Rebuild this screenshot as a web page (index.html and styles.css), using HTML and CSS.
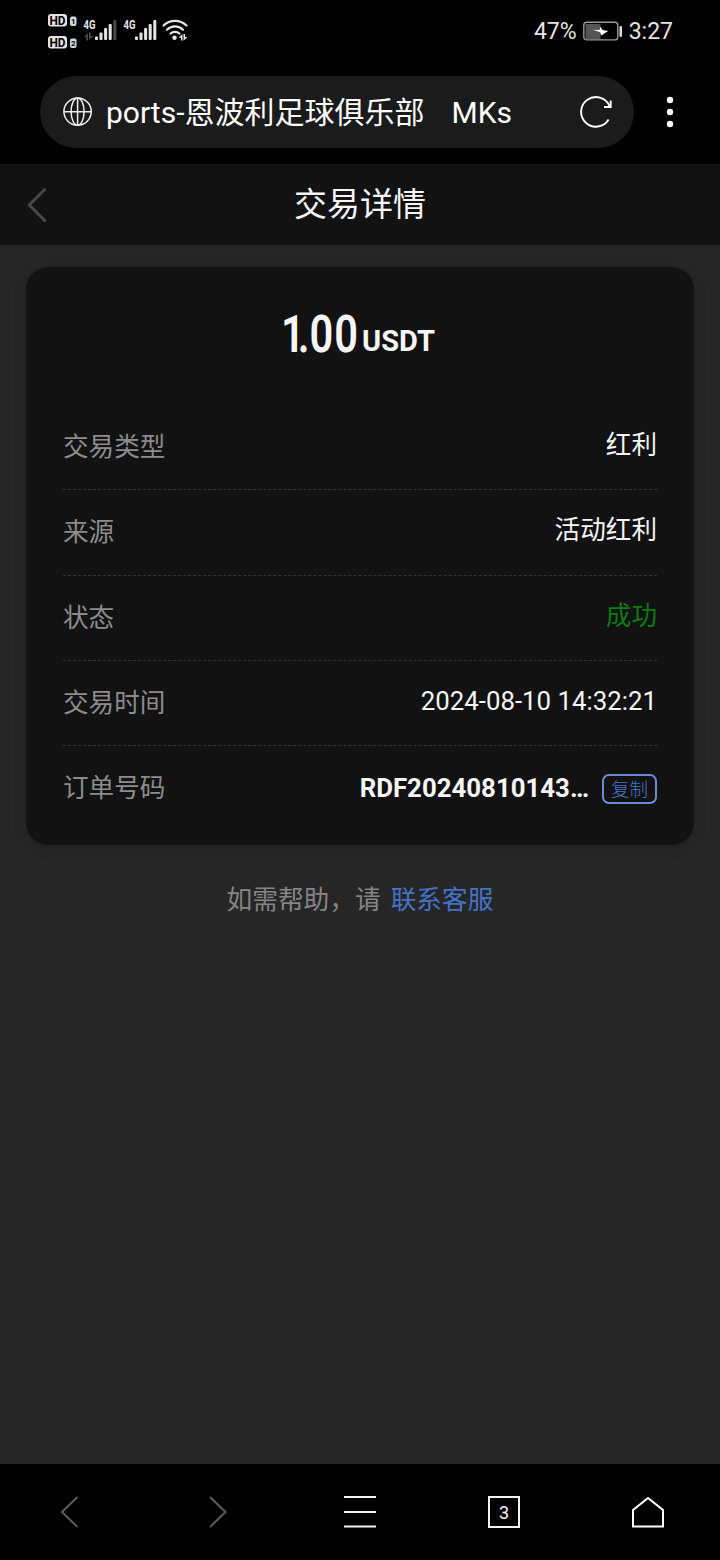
FILE: index.html
```html
<!DOCTYPE html>
<html lang="zh-CN">
<head>
<meta charset="utf-8">
<title>交易详情</title>
<link rel="stylesheet" href="styles.css">
</head>
<body>
<div class="screen">
  <div class="status">
    <svg class="status-icons" width="144" height="44" viewBox="46 8 144 44">
      <rect x="48" y="14" width="19" height="12.500" rx="3" fill="#e4e4e4"/>
      <text class="hd" x="49.500" y="24.700" textLength="16" lengthAdjust="spacingAndGlyphs">HD</text>
      <rect x="70" y="16.500" width="6.500" height="9.500" rx="2" fill="#d8d8d8"/>
      <text class="sim" x="71" y="24.200">1</text>
      <rect x="48" y="36" width="19" height="12.500" rx="3" fill="#e4e4e4"/>
      <text class="hd" x="49.500" y="46.700" textLength="16" lengthAdjust="spacingAndGlyphs">HD</text>
      <rect x="70" y="38.500" width="6.500" height="9.500" rx="2" fill="#d8d8d8"/>
      <text class="sim" x="71" y="46.200">2</text>
      <text class="net" x="83.500" y="29" textLength="12" lengthAdjust="spacingAndGlyphs">4G</text>
      <text class="net" x="123.500" y="29" textLength="12" lengthAdjust="spacingAndGlyphs">4G</text>
      <g fill="#4a4a4a">
        <path d="M84 37l4-4v7.500h-1.700V37zM93 36l-4 4v-7.500h1.700V36z"/>
        <rect x="113.300" y="20" width="3" height="20" rx="1"/>
      </g>
      <g fill="#e6e6e6">
        <rect x="95" y="36.500" width="3" height="3.500" rx="1"/>
        <rect x="99.500" y="32.500" width="3" height="7.500" rx="1"/>
        <rect x="104.100" y="28" width="3" height="12" rx="1"/>
        <rect x="108.700" y="24" width="3" height="16" rx="1"/>
        <rect x="135" y="36.500" width="3" height="3.500" rx="1"/>
        <rect x="139.500" y="32.500" width="3" height="7.500" rx="1"/>
        <rect x="144.100" y="28" width="3" height="12" rx="1"/>
        <rect x="148.700" y="24" width="3" height="16" rx="1"/>
        <rect x="153.300" y="20" width="3" height="20" rx="1"/>
        <circle cx="174.500" cy="37.800" r="2.200"/>
        <path d="M178.500 37.700l4-3.700v6.500h-1.500v-2.800zM187.500 37l-4 3.700v-6.700h1.500v3z"/>
      </g>
      <path d="M163.500 25.500a16.500 16.500 0 0 1 23 0M167 29.700a11.500 11.500 0 0 1 16 0M170.600 33.500a6.500 6.500 0 0 1 8.800 0" fill="none" stroke="#e6e6e6" stroke-width="2.200" stroke-linecap="round"/>
    </svg>
    <div class="status-right">
      <span>47%</span>
      <svg width="40" height="20" viewBox="0 0 40 20">
        <rect x="2.500" y="3" width="15" height="15" fill="#555"/>
        <rect x=".8" y="1.300" width="34" height="17.600" rx="3" fill="none" stroke="#999" stroke-width="1.400"/>
        <rect x="36.500" y="5" width="2.500" height="11" rx="1.200" fill="#ddd"/>
        <path d="M10 8.700l6.500.3 1-3.300 2 3.300 5.700 1-7 4.500-1-3.300z" fill="#fff"/>
      </svg>
      <span>3:27</span>
    </div>
  </div>
  <div class="browser">
    <div class="address">
      <svg width="30" height="30" viewBox="0 0 30 30" fill="none" stroke="#eee" stroke-width="1.500">
        <circle cx="14.600" cy="14.600" r="13.700"/><ellipse cx="14.600" cy="14.600" rx="6.500" ry="13.700"/><path d="M1 14.800h27.500M14.600 1v27.500"/>
      </svg>
      <span class="url">ports-恩波利足球俱乐部<span class="site">　MKs</span></span>
      <svg class="reload" width="34" height="34" viewBox="0 0 34 34" fill="none" stroke="#fff" stroke-width="1.900">
        <path d="M29.600 24.500A14.800 14.800 0 1 1 30.500 11"/><path d="M31.700 5.500v6.500h-6.700"/>
      </svg>
    </div>
    <svg class="more" width="8" height="32" viewBox="0 0 8 32" fill="#f4f4f4"><circle cx="4" cy="4" r="3.200"/><circle cx="4" cy="16" r="3.200"/><circle cx="4" cy="28" r="3.200"/></svg>
  </div>
  <header class="header">
    <svg width="20" height="36" viewBox="0 0 20 36" fill="none" stroke="#484848" stroke-width="3" stroke-linecap="round" stroke-linejoin="round"><path d="M18.700 2.500L3.200 18l15.500 15.500"/></svg>
    <h1>交易详情</h1>
  </header>
  <main class="main">
    <section class="card">
      <div class="amount">
        <svg width="80" height="74" viewBox="-4 -10 80 74"><text class="num" transform="scale(.8 1)" x="-5 16 30.500 61.500" y="45">1.00</text></svg>
        <span class="unit">USDT</span>
      </div>
      <div class="row"><span class="label">交易类型</span><span class="value">红利</span></div>
      <div class="row"><span class="label">来源</span><span class="value">活动红利</span></div>
      <div class="row"><span class="label">状态</span><span class="value success">成功</span></div>
      <div class="row"><span class="label">交易时间</span><span class="value date">2024-08-10 14:32:21</span></div>
      <div class="row"><span class="label">订单号码</span><span class="value order">RDF20240810143…</span><button class="copy">复制</button></div>
    </section>
    <p class="help">如需帮助，请<a>联系客服</a></p>
  </main>
  <nav class="nav">
    <svg width="32" height="32" viewBox="0 0 32 32" stroke="#5c5c5c"><path d="M21.500 1L6 16l15.500 15"/></svg>
    <svg width="32" height="32" viewBox="0 0 32 32" stroke="#5c5c5c"><path d="M10 1l15.500 15L10 31"/></svg>
    <svg width="32" height="32" viewBox="0 0 32 32" stroke="#f4f4f4"><path d="M0 1h32M0 16h32M0 30.500h32"/></svg>
    <span class="tabs">3</span>
    <svg width="32" height="32" viewBox="0 0 32 32" stroke="#fff"><path d="M1 14L16 2l15 12v16.500H1z"/></svg>
  </nav>
</div>
</body>
</html>
```
FILE: styles.css
```css
* { box-sizing: border-box; }
body {
  margin: 0;
  background: #000;
  font-family: Roboto, "Noto Sans CJK SC", sans-serif;
  color: #f5f5f5;
}
svg { display: block; flex: none; }
.screen { display: flex; flex-direction: column; width: 720px; height: 1560px; }
.status {
  display: flex;
  justify-content: space-between;
  height: 76px;
  padding: 8px 47px 0 46px;
}
.status-right {
  display: flex;
  align-items: center;
  gap: 6px;
  height: 46px;
  font-size: 23px;
  color: #e4e4e4;
}
.hd { font: bold 12px Roboto, sans-serif; fill: #000; }
.sim { font: bold 8px Roboto, sans-serif; fill: #000; }
.net { font: bold 12px Roboto, sans-serif; fill: #e6e6e6; }
.browser { display: flex; height: 88px; padding-left: 40px; }
.address {
  display: flex;
  align-items: center;
  width: 594px;
  height: 72px;
  padding: 0 21px 0 23px;
  border-radius: 36px;
  background: #1b1b1b;
}
.url {
  flex: 1;
  padding: 2px 0 0 13px;
  font-size: 30px;
  line-height: 70px;
  white-space: nowrap;
  color: #fff;
}
.site { margin-left: -3px; }
.more { margin: 20px 0 0 32px; }
.header {
  display: flex;
  align-items: center;
  height: 81px;
  padding: 0 46px 0 26px;
  background: #121212;
}
.header h1 {
  flex: 1;
  margin: 0;
  font-size: 33px;
  font-weight: 400;
  line-height: 78px;
  text-align: center;
}
.main { flex: 1; padding: 22px 26px 0; background: #262626; }
.card {
  height: 578px;
  padding: 40px 37px 0;
  border-radius: 22px;
  background: #121212;
  box-shadow: 0 2px 14px rgba(0, 0, 0, .12);
}
.amount {
  display: flex;
  justify-content: center;
  height: 98px;
  padding-right: 4px;
}
.amount svg { margin-top: -10px; }
.num { font: 600 52px Roboto, sans-serif; fill: #f5f5f5; }
.unit { font-size: 29px; font-weight: 700; line-height: 34px; padding: 17px 0 0 1px; }
.row {
  display: flex;
  align-items: center;
  height: 85.300px;
  border-bottom: 1px dashed #333;
  font-size: 25.600px;
  line-height: 38px;
}
.row:last-child { height: 84px; padding-bottom: 1px; border-bottom: 0; }
.label { flex: 1; color: #8c8c8c; }
.value { padding-bottom: 4px; }
.date { font-size: 25.800px; }
.success { color: #0c7c0c; }
.order { padding-bottom: 0; font-size: 25.800px; font-weight: 700; }
.copy {
  width: 55px;
  height: 30px;
  margin: 2px 0 0 13px;
  padding: 0 0 2px;
  border: 2px solid #6f8bd8;
  border-radius: 7px;
  background: transparent;
  color: #4a74c8;
  font: 300 18.500px/24px "Noto Sans CJK SC", sans-serif;
}
.help {
  margin: 36px 0 0;
  font-size: 25.700px;
  line-height: 38px;
  text-align: center;
  color: #858585;
}
.help a { margin-left: 10px; color: #4472c8; }
.nav {
  display: flex;
  justify-content: space-around;
  height: 96px;
  padding-top: 32px;
  background: #000;
}
.nav svg { fill: none; stroke-width: 2; }
.tabs {
  width: 32px;
  height: 32px;
  border: 2px solid #f4f4f4;
  font-size: 18px;
  line-height: 30px;
  text-align: center;
}
```
